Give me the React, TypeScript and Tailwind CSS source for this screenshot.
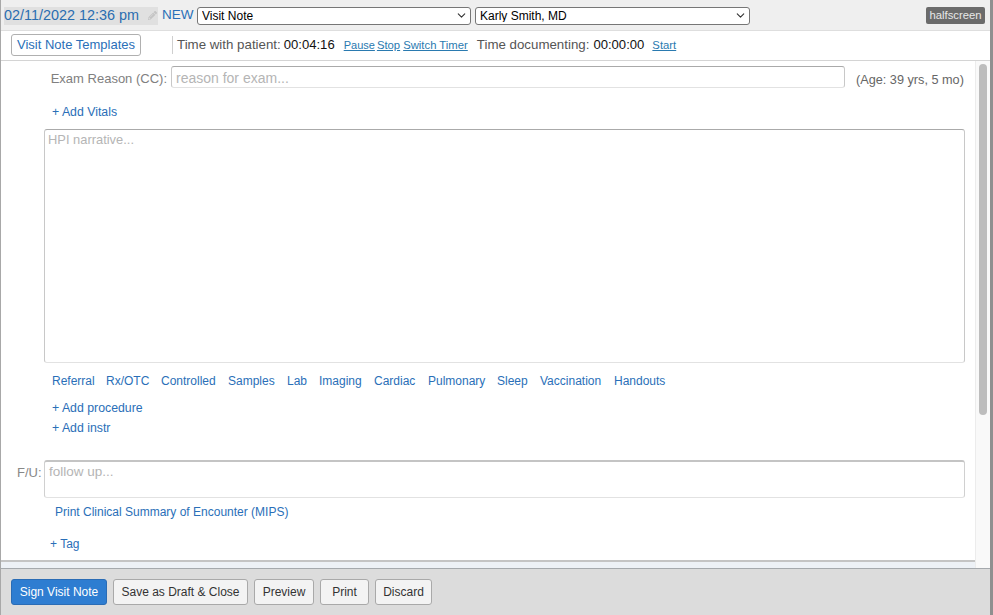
import React from 'react';
import { ChevronDown } from 'lucide-react';
import { FaPencilAlt } from 'react-icons/fa';

const noteLinks = [
  { label: 'Referral', width: 'w-[54px]' },
  { label: 'Rx/OTC', width: 'w-[55px]' },
  { label: 'Controlled', width: 'w-[67px]' },
  { label: 'Samples', width: 'w-[59px]' },
  { label: 'Lab', width: 'w-[32px]' },
  { label: 'Imaging', width: 'w-[55px]' },
  { label: 'Cardiac', width: 'w-[54px]' },
  { label: 'Pulmonary', width: 'w-[69px]' },
  { label: 'Sleep', width: 'w-[43px]' },
  { label: 'Vaccination', width: 'w-[74px]' },
  { label: 'Handouts', width: 'w-[60px]' },
];

function SelectBox({ value, width }: { value: string; width: string }) {
  return (
    <div className={`relative h-[18px] ${width}`}>
      <select
        defaultValue={value}
        className="block h-full w-full appearance-none rounded-[3px] border border-[#767676] bg-white pl-[4px] text-[12px] leading-none text-black"
      >
        <option>{value}</option>
      </select>
      <ChevronDown className="pointer-events-none absolute right-[3px] top-[2px] h-[13px] w-[13px] text-[#333]" strokeWidth={2} />
    </div>
  );
}

function FooterButton({ label, width, primary }: { label: string; width: string; primary?: boolean }) {
  return (
    <button
      className={`h-[26px] rounded-[3px] border text-[12px] ${width} ${
        primary ? 'border-[#2a6cb5] bg-[#2e7dd1] text-white' : 'border-[#a9a9a9] bg-[#f3f3f3] text-[#333]'
      }`}
    >
      {label}
    </button>
  );
}

function App() {
  return (
    <div className="flex h-[615px] w-[993px] flex-col overflow-hidden border-l border-r-[3px] border-l-[#a8a8a8] border-r-[#8f8f8f] bg-white font-['Liberation_Sans',sans-serif]">
      {/* Top bar */}
      <div className="flex h-[31px] shrink-0 items-center border-b border-[#dedede] bg-[#efefef] pt-[1px] pl-[3px] pr-[5px]">
        <div className="flex h-[18px] w-[154px] items-center justify-between bg-[#e0e0e0] pr-[1px]">
          <span className="pt-[1px] text-[14.4px] text-[#2a6db0]">02/11/2022 12:36 pm</span>
          <FaPencilAlt className="h-[9px] w-[9px] text-[#c4c4c4]" />
        </div>
        <span className="ml-[4px] w-[35px] pb-[1px] text-[13.5px] text-[#2a6fb8]">NEW</span>
        <SelectBox value="Visit Note" width="w-[274px]" />
        <div className="w-[4px]" />
        <SelectBox value="Karly Smith, MD" width="w-[275px]" />
        <button className="ml-auto h-[17px] w-[59px] rounded-[2px] bg-[#6b6b6b] text-[11.3px] leading-none text-[#e8e8e8]">halfscreen</button>
      </div>

      {/* Timer row */}
      <div className="flex h-[30px] shrink-0 items-center border-b border-[#d4d4d4] pb-[1px] pl-[10px]">
        <button className="h-[22px] w-[130px] rounded-[3px] border border-[#b0b0b0] text-[13px] text-[#2a6fb8]">Visit Note Templates</button>
        <div className="ml-[31px] h-[18px] w-px bg-[#cfcfcf]" />
        <span className="ml-[4px] text-[13.3px] text-[#555]">Time with patient:</span>
        <span className="ml-[3px] text-[13.1px] text-[#111]">00:04:16</span>
        <a className="ml-[9px] pt-[1px] text-[11px] text-[#2a7ab0] underline">Pause</a>
        <a className="ml-[2px] pt-[1px] text-[11.3px] text-[#2a7ab0] underline">Stop</a>
        <a className="ml-[3px] pt-[1px] text-[11.3px] text-[#2a7ab0] underline">Switch Timer</a>
        <span className="ml-[9px] text-[13.3px] text-[#555]">Time documenting:</span>
        <span className="ml-[4px] text-[13.1px] text-[#111]">00:00:00</span>
        <a className="ml-[8px] pt-[1px] text-[11.3px] text-[#2a7ab0] underline">Start</a>
      </div>

      {/* Scrolling form */}
      <div className="flex min-h-0 flex-1">
        <div className="flex-1">
          <div className="flex h-[501px] flex-col border-b-2 border-[#c4c4c4] text-[12.3px] text-[#2a6fb8]">
            <div className="mt-[5px] flex items-start">
              <label className="w-[166px] pt-[3px] text-right text-[13px] text-[#808080]">Exam Reason (CC):</label>
              <div className="ml-[4px] flex h-[22px] w-[674px] items-center rounded-[3px] border border-[#c8c8c8] border-b-[#e2e2e2] border-t-[#aaa] px-[4px] pt-[2px] text-[14px] text-[#b5b5b5]">reason for exam...</div>
              <span className="ml-[11px] pt-[5px] text-[12.7px] text-[#666]">(Age: 39 yrs, 5 mo)</span>
            </div>

            <a className="ml-[51px] mt-[14px] leading-[16px]">+ Add Vitals</a>

            <div className="ml-[43px] mt-[9px] h-[234px] w-[921px] rounded-[3px] border border-[#c8c8c8] border-b-[#e2e2e2] border-t-[#aaa] px-[3px] py-[3px] text-[12.9px] leading-[14px] text-[#b5b5b5]">HPI narrative...</div>

            <div className="ml-[51px] mt-[10px] flex text-[12px] leading-[16px]">
              {noteLinks.map((link) => (
                <a key={link.label} className={link.width}>{link.label}</a>
              ))}
            </div>

            <a className="ml-[51px] mt-[11px] leading-[16px]">+ Add procedure</a>
            <a className="ml-[51px] mt-[4px] leading-[16px]">+ Add instr</a>

            <div className="mt-[24px] flex items-start">
              <label className="ml-[16px] w-[27px] pt-[3px] text-[13px] text-[#888]">F/U:</label>
              <div className="h-[38px] w-[921px] rounded-[3px] border border-t-2 border-[#d0d0d0] border-b-[#e2e2e2] border-t-[#c4c4c4] px-[4px] pt-[3px] text-[13.5px] leading-[14px] text-[#b5b5b5]">follow up...</div>
            </div>

            <a className="ml-[54px] mt-[6px] text-[12px] leading-[16px]">Print Clinical Summary of Encounter (MIPS)</a>
            <a className="ml-[49px] mt-[16px] text-[12px] leading-[16px]">+ Tag</a>
          </div>
          <div className="h-[6px] bg-[#edf1f6]" />
        </div>

        {/* Scrollbar */}
        <div className="w-[15px] shrink-0 border-l border-[#ececec] bg-[#f9f9f9] pl-[3px] pt-[3px]">
          <div className="h-[351px] w-[8px] rounded-full bg-[#bdbdbd]" />
        </div>
      </div>

      {/* Footer actions */}
      <div className="flex h-[47px] shrink-0 items-start gap-[6px] border-t border-[#a5a9ad] bg-[#dcdcdc] pl-[10px] pt-[10px]">
        <FooterButton label="Sign Visit Note" width="w-[96px]" primary />
        <FooterButton label="Save as Draft & Close" width="w-[135px]" />
        <FooterButton label="Preview" width="w-[60px]" />
        <FooterButton label="Print" width="w-[49px]" />
        <FooterButton label="Discard" width="w-[57px]" />
      </div>
    </div>
  );
}

export default App;
